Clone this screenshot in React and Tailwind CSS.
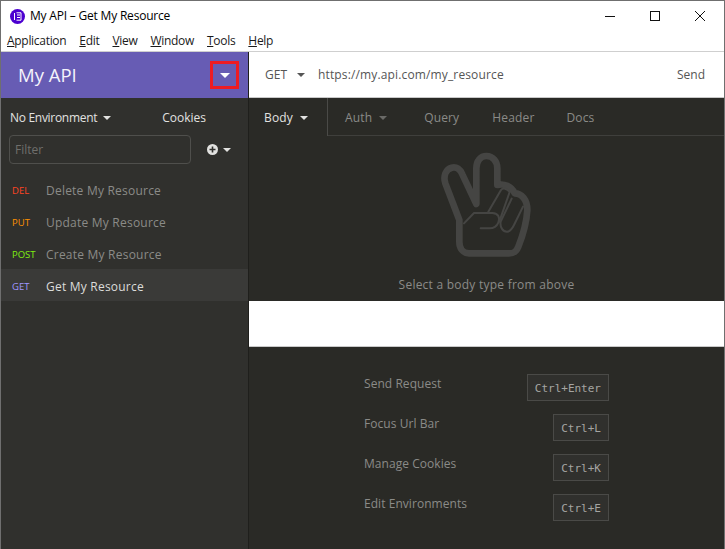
import React from "react";

const Caret = ({ className = "", w = 9, h = 5 }) => (
  <svg width={w} height={h} viewBox="0 0 10 5" className={className} fill="currentColor">
    <path d="M0 0h10L5 5z" />
  </svg>
);

const Hand = () => (
  <svg width="95" height="110" viewBox="120 30 285 330" fill="none" stroke="#454543" strokeLinecap="round" strokeLinejoin="round">
    <path
      strokeWidth="20"
      d="M181 240 L139 130 C132 108 140 88 158 83 C172 79 184 88 190 103 L232 192 L232 85 C232 62 245 48 262 48 C282 48 295 65 295 85 L295 135 C315 130 338 138 347 160 C368 160 385 180 385 210 C383 245 370 290 358 320 C352 335 345 340 330 340 L210 340 C192 340 181 325 181 305 Z"
    />
    <path strokeWidth="6" d="M195 250 L225 219 L280 219 C298 219 304 234 298 248 C292 262 282 265 272 265 L245 265" />
    <path strokeWidth="6" d="M268 215 L306 150 C312 142 324 146 332 156 L301 245" />
    <path strokeWidth="6" d="M338 176 L305 245 C302 262 312 276 325 275 C335 274 340 265 345 255 L372 200" />
  </svg>
);

const methods = [
  { m: "DEL", c: "text-[#ff4422]", n: "Delete My Resource" },
  { m: "PUT", c: "text-[#ff9000]", n: "Update My Resource" },
  { m: "POST", c: "text-[#7fee10]", n: "Create My Resource" },
  { m: "GET", c: "text-[#a096ff]", n: "Get My Resource", active: true },
];

const menus = [
  ["A", "pplication"],
  ["E", "dit"],
  ["V", "iew"],
  ["W", "indow"],
  ["T", "ools"],
  ["H", "elp"],
];

const shortcuts = [
  ["Send Request", "Ctrl+Enter"],
  ["Focus Url Bar", "Ctrl+L"],
  ["Manage Cookies", "Ctrl+K"],
  ["Edit Environments", "Ctrl+E"],
];

export default function App() {
  return (
    <div className="w-[725px] h-[549px] overflow-hidden flex flex-col bg-white border border-[#6f6f6f] border-b-0 font-['Open_Sans','Noto_Sans',sans-serif] text-[12px]">
      {/* title bar */}
      <div className="h-[30px] flex items-center shrink-0 bg-white text-black">
        <div className="ml-[9px] w-[15px] h-[15px] rounded-full bg-[#4c00d0] flex items-center justify-center">
          <svg width="9" height="9" viewBox="0 0 9 9" fill="none" stroke="white" strokeWidth="1">
            <path d="M1.5 1v7M3.5 .8h4.5v7.4H3.5M4 3h3M4 5.5h3" />
          </svg>
        </div>
        <span className="ml-[5px] text-[12px] tracking-[-0.2px]">My API – Get My Resource</span>
        <div className="ml-auto flex items-center gap-[35px] mr-[19px]">
          <svg width="10" height="10" viewBox="0 0 10 10" stroke="#111" fill="none"><path d="M0 5.5h10" /></svg>
          <svg width="10" height="10" viewBox="0 0 10 10" stroke="#111" fill="none"><rect x=".5" y=".5" width="9" height="9" /></svg>
          <svg width="10" height="10" viewBox="0 0 10 10" stroke="#111" fill="none"><path d="M0 0l10 10M10 0L0 10" /></svg>
        </div>
      </div>
      {/* menu */}
      <div className="h-[20px] flex items-center shrink-0 gap-[13px] pl-[6px] text-[12px] text-[#1a1a1a] bg-white tracking-[-0.3px]">
        {menus.map(([a, b]) => (
          <span key={b}>
            <span className="underline">{a}</span>
            {b}
          </span>
        ))}
      </div>
      {/* body */}
      <div className="flex flex-1 min-h-0 border-t border-[#cfcfcf]">
        {/* sidebar */}
        <aside className="w-[248px] shrink-0 flex flex-col bg-[#30302d] border-r border-[#1f1f1c]">
          <div className="h-[46px] shrink-0 bg-[#675cb4] flex items-center pl-[17px] pr-[9px] justify-between text-white">
            <span className="text-[18.5px] text-[#f4f3fb]">My API</span>
            <div className="w-[29px] h-[28px] border-[3px] border-[#ed1c24] flex items-center justify-center">
              <Caret w={10} h={5} className="text-white" />
            </div>
          </div>
          <div className="h-[35px] shrink-0 flex items-center pl-[9px] text-[12px] text-[#e2e2e0] mt-[2px]">
            <span className="tracking-[-0.3px]">No Environment</span>
            <Caret className="ml-[6px] text-[#e2e2e0]" w={8} h={4} />
            <span className="ml-[51px]">Cookies</span>
          </div>
          <div className="flex items-center pl-[8px] shrink-0">
            <div className="w-[182px] h-[29px] rounded-[4px] border border-[#4f4f4c] flex items-center pl-[5px] text-[#6f6f6c] text-[12px]">
              Filter
            </div>
            <svg width="11" height="11" viewBox="0 0 11 11" className="ml-[16px]">
              <circle cx="5.5" cy="5.5" r="5.5" fill="#e2e2e0" />
              <path d="M5.5 2.5v6M2.5 5.5h6" stroke="#30302d" strokeWidth="1.6" />
            </svg>
            <Caret className="ml-[5px] text-[#e2e2e0]" w={8} h={4} />
          </div>
          <div className="mt-[9px] flex flex-col">
            {methods.map((r) => (
              <div key={r.m} className={`h-[32px] flex items-center pl-[11px] pt-[4px] ${r.active ? "bg-[#3a3a38]" : ""}`}>
                <span className={`w-[34px] text-[9.5px] font-medium ${r.c}`}>{r.m}</span>
                <span className={`text-[12px] tracking-[0.22px] ${r.active ? "text-[#dcdcda]" : "text-[#8b8b88]"}`}>{r.n}</span>
              </div>
            ))}
          </div>
        </aside>
        {/* main */}
        <main className="flex-1 min-w-0 flex flex-col bg-[#2a2a26]">
          <div className="h-[46px] shrink-0 bg-white flex items-center pl-[16px] pr-[19px] border-b border-[#c9c9c9] text-[12px] text-[#555]">
            <span>GET</span>
            <Caret className="ml-[10px] text-[#555]" w={8} h={4} />
            <span className="ml-[13px] text-[#555] tracking-[0.14px]">https://my.api.com/my_resource</span>
            <span className="ml-auto">Send</span>
          </div>
          <div className="h-[38px] shrink-0 flex items-stretch text-[12px] tracking-[0.15px] text-[#8b8b88] border-b border-[#3f3f3c]">
            <div className="w-[79px] -mb-[1px] pt-[2px] bg-[#2a2a26] border-r border-[#4a4a47] flex items-center pl-[15px] text-[#e2e2e0]">
              Body
              <Caret className="ml-[7px]" w={8} h={4} />
            </div>
            <div className="flex items-center pt-[2px] pl-[17px]">
              Auth
              <Caret className="ml-[7px] text-[#6a6a67]" w={8} h={4} />
            </div>
            <div className="flex items-center pt-[2px] ml-[37px]">Query</div>
            <div className="flex items-center pt-[2px] ml-[33px]">Header</div>
            <div className="flex items-center pt-[2px] ml-[32px]">Docs</div>
          </div>
          <div className="flex-1 min-h-0 flex flex-col items-center">
            <div className="mt-[14px] h-[110px]"><Hand /></div>
            <div className="mt-[16px] text-[12px] tracking-[0.24px] text-[#8b8b88]">Select a body type from above</div>
          </div>
          <div className="h-[46px] shrink-0 bg-white border-b border-[#c9c9c9]" />
          <div className="h-[202px] shrink-0 pt-[27px] pl-[115px] pr-[115px] flex flex-col gap-[13px]">
            {shortcuts.map(([l, k]) => (
              <div key={k} className="flex justify-between h-[27px] text-[12px] tracking-[0.05px] text-[#8b8b88]">
                <span className="leading-[20px]">{l}</span>
                <span className="h-[27px] px-[7px] pt-[3px] flex items-center bg-[#30302d] border border-[#4a4a47] font-['DejaVu_Sans_Mono',monospace] text-[11px] tracking-normal text-[#a5a5a2]">
                  {k}
                </span>
              </div>
            ))}
          </div>
        </main>
      </div>
    </div>
  );
}
